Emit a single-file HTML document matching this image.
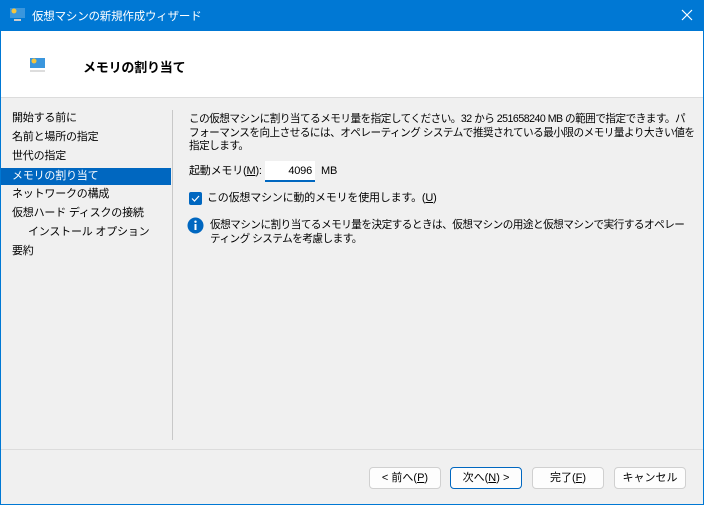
<!DOCTYPE html><html><head><meta charset="utf-8"><style>
*{margin:0;padding:0;box-sizing:border-box}
body{width:704px;height:505px;overflow:hidden;font-family:"Liberation Sans","Noto Sans CJK JP",sans-serif;font-size:11px;letter-spacing:-0.2px;color:#000;background:#f0f0f0;position:relative}
.win{position:absolute;inset:0;border:1px solid #0078d4;border-top:none}
.title{position:absolute;left:0;top:0;width:704px;height:31px;background:#0078d4;color:#fff;font-size:11.5px}
.title span{position:absolute;left:32px;top:8px}
.header{position:absolute;left:1px;top:31px;width:702px;height:67px;background:#fff;border-bottom:1px solid #dcdcdc}
.header b{position:absolute;left:82px;top:26px;font-size:13px;font-weight:bold}
.nav div{position:absolute;left:1px;width:170px;height:17px;padding-left:11px;line-height:17px}
.sel{background:#0067c0;color:#fff}
.vsep{position:absolute;left:172px;top:110px;width:1px;height:330px;background:#c8c8c8}
.hsep{position:absolute;left:1px;top:449px;width:702px;height:1px;background:#dcdcdc}
.t{position:absolute;left:189px;line-height:13.5px;font-size:11px;white-space:nowrap}
.t.p{letter-spacing:-0.5px;font-size:10.6px}
.btn{position:absolute;top:467px;height:22px;width:72px;background:#fdfdfd;border:1px solid #d0d0d0;border-radius:4px;text-align:center;line-height:20px;font-size:11px;letter-spacing:0}
</style></head><body>
<div class="title"><svg style="position:absolute;left:9px;top:7px" width="17" height="16"><rect x="1" y="1" width="15" height="10" fill="#3a96dd"/><circle cx="5" cy="4" r="2.5" fill="#f6c53c"/><rect x="5" y="12" width="7" height="2" fill="#ccc"/></svg><span>仮想マシンの新規作成ウィザード</span>
<svg style="position:absolute;left:681px;top:9px" width="12" height="12"><path d="M1 1L11 11M11 1L1 11" stroke="#fff" stroke-width="1.2"/></svg></div>
<div class="header"><svg style="position:absolute;left:28px;top:26px" width="18" height="17"><rect x="1" y="1" width="15" height="10" fill="#3a96dd"/><circle cx="5" cy="4" r="2.5" fill="#f6c53c"/><rect x="1" y="13" width="15" height="2" fill="#ddd"/></svg><b>メモリの割り当て</b></div>
<div class="nav">
<div style="top:110px">開始する前に</div>
<div style="top:129px">名前と場所の指定</div>
<div style="top:148px">世代の指定</div>
<div class="sel" style="top:168px">メモリの割り当て</div>
<div style="top:186px">ネットワークの構成</div>
<div style="top:205px">仮想ハード ディスクの接続</div>
<div style="top:224px;padding-left:27px">インストール オプション</div>
<div style="top:243px">要約</div>
</div>
<div class="vsep"></div>
<div class="t p" style="top:113px">この仮想マシンに割り当てるメモリ量を指定してください。32 から 251658240 MB の範囲で指定できます。パ<br>フォーマンスを向上させるには、オペレーティング システムで推奨されている最小限のメモリ量より大きい値を<br>指定します。</div>
<div class="t" style="top:165px">起動メモリ(<u>M</u>):</div>
<div style="position:absolute;left:265px;top:161px;width:50px;height:21px;background:#fff;border-bottom:2px solid #0067c0;font-size:11px;text-align:right;padding-right:3px;line-height:20px">4096</div>
<div class="t" style="top:165px;left:321px">MB</div>
<div style="position:absolute;left:189px;top:192px;width:13px;height:13px;background:#0067c0;border-radius:2px"><svg width="13" height="13"><path d="M3 6.5L5.5 9L10 4" stroke="#fff" fill="none" stroke-width="1.2"/></svg></div>
<div class="t" style="top:192px;left:207px">この仮想マシンに動的メモリを使用します。(<u>U</u>)</div>
<svg style="position:absolute;left:187px;top:217px" width="17" height="17"><circle cx="8.5" cy="8.5" r="8" fill="#0067c0"/><rect x="7.5" y="7" width="2" height="6" fill="#fff"/><circle cx="8.5" cy="4.7" r="1.2" fill="#fff"/></svg>
<div class="t p" style="top:219px;left:210px">仮想マシンに割り当てるメモリ量を決定するときは、仮想マシンの用途と仮想マシンで実行するオペレー<br>ティング システムを考慮します。</div>
<div class="hsep"></div>
<div class="btn" style="left:369px">&lt; 前へ(<u>P</u>)</div>
<div class="btn" style="left:450px;border:1px solid #0067c0">次へ(<u>N</u>) &gt;</div>
<div class="btn" style="left:532px">完了(<u>F</u>)</div>
<div class="btn" style="left:614px">キャンセル</div>
<div class="win"></div>
</body></html>
